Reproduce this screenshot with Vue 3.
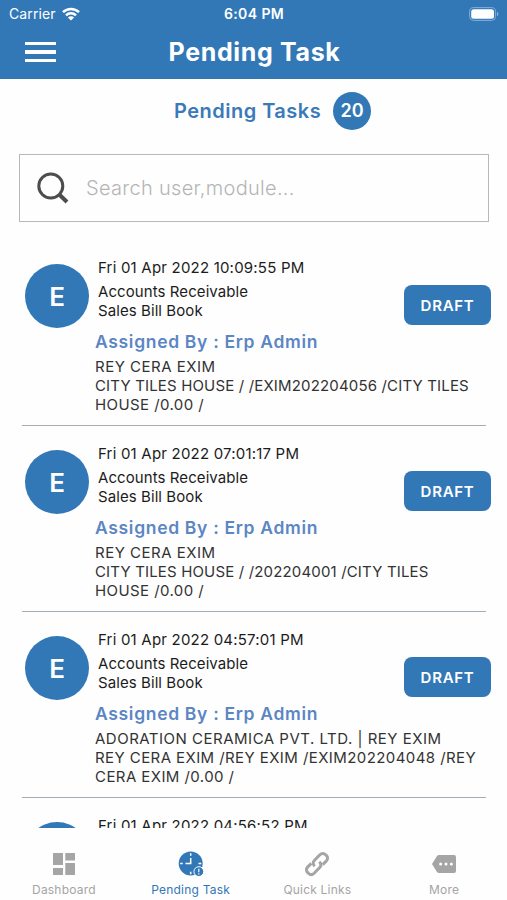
<script setup>
import { ref } from "vue";

const search = ref("");
const activeTab = ref("Pending Task");

const tabs = ["Dashboard", "Pending Task", "Quick Links", "More"];

const tasks = ref([
  {
    date: "Fri 01 Apr 2022 10:09:55 PM",
    party: "REY CERA EXIM",
    details: ["CITY TILES HOUSE / /EXIM202204056 /CITY TILES", "HOUSE /0.00 /"],
  },
  {
    date: "Fri 01 Apr 2022 07:01:17 PM",
    party: "REY CERA EXIM",
    details: ["CITY TILES HOUSE / /202204001 /CITY TILES", "HOUSE /0.00 /"],
  },
  {
    date: "Fri 01 Apr 2022 04:57:01 PM",
    party: "ADORATION CERAMICA PVT. LTD. | REY EXIM",
    details: ["REY CERA EXIM /REY EXIM /EXIM202204048 /REY", "CERA EXIM /0.00 /"],
  },
]);

const nextTaskDate = "Fri 01 Apr 2022 04:56:52 PM";
</script>

<template>
  <div class="screen">
    <header class="header">
      <div class="status-bar">
        <div class="carrier">
          <span>Carrier</span>
          <svg class="wifi" viewBox="0 0 18 14">
            <g fill="none" stroke="#fff" stroke-width="2.5">
              <path d="M1 5.2a11.4 11.4 0 0 1 16 0" />
              <path d="M4 8.4a7.1 7.1 0 0 1 10 0" />
            </g>
            <path d="M9 13.6L5.9 10.5a4.4 4.4 0 0 1 6.2 0z" fill="#fff" />
          </svg>
        </div>
        <span class="time">6:04 PM</span>
        <svg class="battery" viewBox="0 0 30 14">
          <rect x="0.6" y="0.6" width="26" height="12.8" rx="4" fill="none" stroke="#84b0da" />
          <rect x="2.2" y="2.2" width="22.8" height="9.6" rx="2.5" fill="#fff" />
          <path d="M28 4.8c2 .8 2 3.6 0 4.4z" fill="#84b0da" />
        </svg>
      </div>
      <div class="title-bar">
        <button type="button" class="menu-button" aria-label="Menu">
          <span></span>
          <span></span>
          <span></span>
        </button>
        <h1>Pending Task</h1>
      </div>
    </header>

    <div class="summary">
      <h2>Pending Tasks</h2>
      <span class="count">20</span>
    </div>

    <div class="search-box">
      <svg viewBox="0 0 32 32" fill="none" stroke="#4d4d4d">
        <circle cx="13.8" cy="14" r="12" stroke-width="3" />
        <path d="M22 22.2L30 30" stroke-width="4" />
      </svg>
      <input v-model="search" type="text" placeholder="Search user,module..." />
    </div>

    <div class="task-list">
      <div v-for="(task, index) in tasks" :key="`task-${index}`" class="task">
        <div class="avatar">E</div>
        <div class="task-body">
          <div class="date">{{ task.date }}</div>
          <div class="module">Accounts Receivable<br />Sales Bill Book</div>
          <div class="assigned">Assigned By : Erp Admin</div>
          <div class="details">
            <div class="party">{{ task.party }}</div>
            <div
              v-for="line in task.details"
              :key="line"
              :class="{ tight: line.startsWith('CITY') }"
            >
              {{ line }}
            </div>
          </div>
        </div>
        <button type="button" class="draft-button">DRAFT</button>
      </div>
      <div class="task">
        <div class="avatar"></div>
        <div class="task-body">
          <div class="date">{{ nextTaskDate }}</div>
        </div>
      </div>
    </div>

    <nav class="tab-bar">
      <button
        v-for="tab in tabs"
        :key="tab"
        type="button"
        class="tab"
        :class="{ active: tab === activeTab }"
        @click="activeTab = tab"
      >
        <svg v-if="tab === 'Dashboard'" viewBox="0 0 26 26" fill="currentColor">
          <path d="M2 2h10v12H2zM14.3 2H24v7.5h-9.7zM2 17h10v7H2zM14.3 12H24v12h-9.7z" />
        </svg>
        <svg v-else-if="tab === 'Pending Task'" viewBox="0 0 26 26">
          <circle cx="12.7" cy="12.6" r="12" fill="currentColor" />
          <path
            d="M12.7 2.3v2.5M12.7 7v5.6H7.5M2.2 12.6h2.5M20.5 12.6h2.8M12.7 20.8v2.5"
            fill="none"
            stroke="#fff"
            stroke-width="1.5"
          />
          <circle cx="20.8" cy="20.6" r="4.9" fill="currentColor" stroke="#fff" stroke-width="1" />
          <path d="M20.8 17.8v3.4M20.8 22.3v1.2" stroke="#fff" stroke-width="1.2" />
        </svg>
        <svg
          v-else-if="tab === 'Quick Links'"
          viewBox="0 0 26 26"
          fill="none"
          stroke="currentColor"
          stroke-width="3"
        >
          <path d="M10.7 15.3c-2-2-2-4.3-.2-6.1l5.4-5.4c1.8-1.8 4-1.8 5.7-.1l.7.7c1.7 1.7 1.7 3.9-.1 5.7l-3.5 3.5" />
          <path d="M15.3 10.7c2 2 2 4.3.2 6.1l-5.4 5.4c-1.8 1.8-4 1.8-5.7.1l-.7-.7c-1.7-1.7-1.7-3.9.1-5.7l3.5-3.5" />
        </svg>
        <svg v-else viewBox="0 0 26 26">
          <path
            d="M8.2 4H23a2 2 0 0 1 2 2v14a2 2 0 0 1-2 2H8.2a3 3 0 0 1-2.4-1.2L1 13l4.8-7.8A3 3 0 0 1 8.2 4z"
            fill="currentColor"
          />
          <g fill="#fff">
            <circle cx="9.6" cy="13" r="1.5" />
            <circle cx="15" cy="13" r="1.5" />
            <circle cx="20.4" cy="13" r="1.5" />
          </g>
        </svg>
        <span>{{ tab }}</span>
      </button>
    </nav>
  </div>
</template>

<style>
body {
  margin: 0;
  background-color: #fff;
}
</style>

<style scoped>
.screen {
  display: flex;
  flex-direction: column;
  width: 507px;
  height: 900px;
  overflow: hidden;
  background-color: #fefefe;
  font-family: Inter, "Liberation Sans", sans-serif;
}

button {
  padding: 0;
  border: none;
  background: none;
  font-family: inherit;
  cursor: pointer;
}

.header {
  flex: none;
  height: 79px;
  background-color: #3278b7;
  color: #fff;
}

.status-bar {
  display: grid;
  grid-template-columns: 1fr auto 1fr;
  align-items: center;
  height: 27px;
  padding: 0 8px 0 9px;
  font-size: 14px;
}

.carrier {
  display: flex;
  align-items: center;
  gap: 6px;
  letter-spacing: 0.1px;
}

.wifi {
  width: 18px;
  height: 14px;
}

.time {
  font-weight: 600;
  letter-spacing: 0.4px;
}

.battery {
  justify-self: end;
  width: 30px;
  height: 14px;
}

.title-bar {
  display: grid;
  grid-template-columns: 56px 1fr 54px;
  align-items: center;
  height: 50px;
}

.menu-button {
  display: flex;
  flex-direction: column;
  gap: 5px;
  width: 31px;
  margin-left: 25px;
}

.menu-button span {
  height: 3.5px;
  background-color: #fff;
}

h1 {
  margin: 0;
  font-size: 25px;
  font-weight: 700;
  text-align: center;
  letter-spacing: 0.65px;
}

.summary {
  display: flex;
  flex: none;
  align-items: center;
  gap: 12px;
  height: 64px;
  padding-left: 174px;
}

h2 {
  margin: 0;
  color: #3b7ab8;
  font-size: 20px;
  font-weight: 600;
  letter-spacing: 0.48px;
}

.count {
  width: 38px;
  height: 38px;
  border-radius: 50%;
  background-color: #3278b7;
  color: #fff;
  font-size: 18px;
  font-weight: 600;
  line-height: 38px;
  text-align: center;
}

.search-box {
  display: flex;
  flex: none;
  box-sizing: border-box;
  align-items: center;
  gap: 17px;
  height: 68px;
  margin: 11px 18px 18px 19px;
  padding-left: 17px;
  border: 1.5px solid #b8b8b8;
}

.search-box svg {
  width: 32px;
  height: 32px;
}

.search-box input {
  flex: 1;
  min-width: 0;
  padding: 0;
  border: none;
  outline: none;
  background: none;
  font-family: inherit;
  font-size: 20px;
  font-weight: 300;
  letter-spacing: 0.3px;
}

.search-box input::placeholder {
  color: #b5b5b5;
}

.task-list {
  flex: 1;
  min-height: 0;
  overflow: hidden;
}

.task {
  display: flex;
  box-sizing: border-box;
  height: 186px;
  margin: 0 21px 0 22px;
  border-bottom: 1px solid #a3adb3;
}

.avatar {
  flex: none;
  width: 64px;
  height: 64px;
  margin: 24px 6px 0 3px;
  border-radius: 50%;
  background-color: #3278b7;
  color: #fff;
  font-size: 26px;
  font-weight: 600;
  line-height: 65px;
  text-align: center;
}

.task-body {
  flex: 1;
  width: 0;
  padding-top: 18px;
  color: #1c1c1c;
  white-space: nowrap;
}

.date {
  margin-left: 3px;
  font-size: 15px;
  line-height: 20px;
  letter-spacing: 0.2px;
}

.module {
  margin: 4px 0 10px 3px;
  font-size: 15px;
  line-height: 19px;
  letter-spacing: 0.08px;
}

.assigned {
  margin-bottom: 3px;
  color: #5b86c4;
  font-size: 17.5px;
  font-weight: 600;
  line-height: 24px;
  letter-spacing: 0.68px;
}

.details {
  color: #333;
  font-size: 15px;
  line-height: 19px;
  letter-spacing: 0.42px;
}

.party {
  letter-spacing: 0.5px;
}

.tight {
  letter-spacing: 0.16px;
}

.draft-button {
  flex: none;
  width: 87px;
  height: 40px;
  margin: 45px -5px 0 0;
  border-radius: 8px;
  background-color: #3278b7;
  color: #fff;
  font-size: 15px;
  font-weight: 600;
  letter-spacing: 0.7px;
}

.tab-bar {
  display: flex;
  flex: none;
  height: 72px;
  background-color: #fefefe;
}

.tab {
  display: flex;
  flex: 1;
  flex-direction: column;
  align-items: center;
  padding: 23px 0 0 1px;
  color: #a5a5a5;
  font-size: 12px;
  letter-spacing: 0.2px;
}

.tab svg {
  width: 26px;
  height: 26px;
}

.tab span {
  margin-top: 5px;
  line-height: 16px;
}

.tab.active {
  color: #3278b7;
}
</style>
